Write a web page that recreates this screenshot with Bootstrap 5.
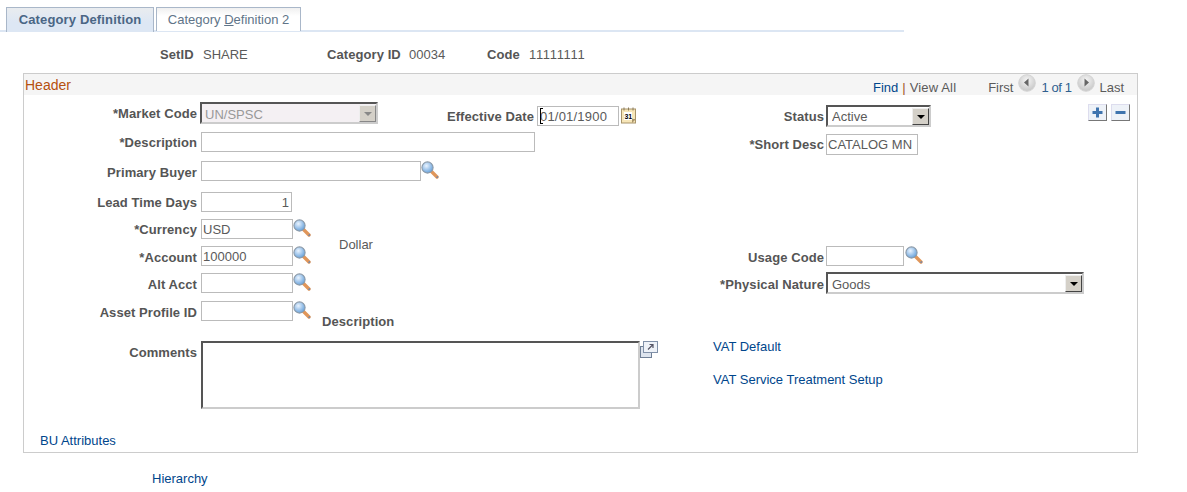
<!DOCTYPE html>
<html lang="en"><head><meta charset="utf-8"><title>Category Definition</title>
<link href="https://cdn.jsdelivr.net/npm/bootstrap@5.3.0/dist/css/bootstrap.min.css" rel="stylesheet">
<style>
html,body{height:492px;overflow:hidden}
body{background:#fff;color:#5a5a5a;font:13px/20px "Liberation Sans",Arial,sans-serif}
a{color:#00468c;text-decoration:none}
b,.lblx,.lbly{letter-spacing:.08px;color:#555}
.tabstrip{padding:7px 0 0 6px;width:904px;height:32px;border-bottom:2px solid #dce6f3;gap:2px;align-items:flex-start}
.tabx{height:24px;line-height:24px;text-align:center;border:1px solid #a9b7c9;border-bottom:0;background:linear-gradient(#f0f0f0,#fff 35%)}
.tabx.on{width:148px;height:25px;font-weight:700;color:#4a6685;letter-spacing:.15px;background:linear-gradient(#e9ecef,#dde7f4 60%)}
.tabx.off{width:145px;color:#607488}
.idrow{height:41px;padding-top:13px}
.idrow span,.idrow b{display:block;white-space:nowrap}
.ones{letter-spacing:.65px}
.w1{margin-left:160px;width:43px}.w2{width:124px}.w3{width:82px}.w4{width:78px}.w5{width:42px}
.panelx{margin-left:23px;width:1115px;height:380px;border:1px solid #ccc}
.bandx{height:21px;background:#f5f5f5;position:relative}
.bandx .ttl{color:#b5500f;font-size:14px;line-height:22px;padding-left:1px;width:849px}
.bandx .nv{white-space:nowrap;line-height:27px}
.bandx .bar{color:#a0562a;margin:0 4px}
.viewall{letter-spacing:.15px}
.pageof{letter-spacing:-.4px;color:#2f5f8f}
.ms-first{margin-left:32px}
.disc1{margin:0 5px}
.frow{align-items:flex-start}
.lblx{width:173px;margin-right:4px;text-align:right;font-weight:700;white-space:nowrap;flex:none}
.lbly{text-align:right;font-weight:700;white-space:nowrap;flex:none;margin-right:3px}
.form-control.inp{width:92px;height:20px;min-height:0;padding:0 1px;border:1px solid #bbb;border-radius:0;color:#5a5a5a;font-size:13px;line-height:18px;background:#fff;box-shadow:none;flex:none}
.form-control.inp.w-desc{width:334px}
.form-control.inp.w-sd{width:92px;margin-top:2px;height:21px}
.form-control.inp.w-pb{width:220px}
.form-control.inp.w-ld{width:91px;padding-right:2px}
.form-control.inp.w-uc{width:78px;margin-right:1px}
.form-control.inp.w-dt{width:82px;padding-left:2px;letter-spacing:.2px;height:20px}
.sel{position:relative;flex:none;height:22px;border:2px solid;border-color:#555 #ccc #ccc #555;background:#fff}
.sel select.form-select{height:100%;width:100%;border:0;border-radius:0;padding:1px 4px 0;background-image:none;color:#5a5a5a;font-size:13px;line-height:18px;background-color:transparent;box-shadow:none}
.sel.sc select.form-select{padding-top:2px}
.sel .drop{position:absolute;right:0;top:1px;width:17px;height:17px;background:#d4d0c8;border:1px solid;border-color:#eee #444 #444 #eee;pointer-events:none}
.sel .drop::after{content:"";position:absolute;left:4px;top:6px;border:4px solid transparent;border-top:4px solid #000;border-bottom:0}
.sel.dis{background:#f4f0f3}
.sel.dis select.form-select{color:#999;background:#f4f0f3;padding:2px 3px 0}
.sel.dis .drop::after{border-top-color:#888}
.sel.dis .drop{border-color:#eee #888 #888 #eee}
.caretx{position:absolute;left:3px;top:2px;width:1px;height:16px;background:#000;pointer-events:none}
.caretx::before,.caretx::after{content:"";position:absolute;left:0;width:3px;height:1px;background:#000}
.caretx::before{top:0}.caretx::after{bottom:0}
.icox{flex:none;display:block}
.areax.form-control{width:439px;height:68px;border:2px solid;border-color:#555 #ccc #ccc #555;border-radius:0;box-shadow:none;resize:none;flex:none;padding:0;min-height:0}
.pm{width:19px;height:17px;background:#eef2f8;border:1px solid;border-color:#dde #777 #777 #dde;padding:0;display:block}
.pm svg{display:block}
.foot{margin:16px 0 0 152px}
.r1{height:37px;padding-top:7px}.r2{height:29px}.r3{height:31px}.r4{height:27px}.r5{height:27px}.r6{height:27px}.r7{height:28px}.r8{height:40px}.r9{height:75px}
.r1 .lblx{margin-top:2px}
.sa{width:178px;margin-left:-1px}
.l-eff{width:156px;margin-top:5px}
.i-eff{margin-top:4px}
.cal{margin:5px 0 0 2px}
.l-st{width:187px;margin-top:5px;margin-right:2px}
.sb{width:105px;margin-top:3px}
.pmwrap{margin:2px 0 0 157px;gap:4px}
.r2 .lblx{margin-top:1px}
.l-sd{width:289px;margin-top:3px;margin-right:2px}
.r3 .lblx{margin-top:2px}
.r4 .lblx,.r5 .lblx{margin-top:1px}
.r6 .lblx,.r7 .lblx,.r8 .lblx,.r9 .lblx{margin-top:2px}
.dollar{margin:16px 0 0 28px}
.l-uc{width:513px;margin-right:2px;margin-top:2px}
.l-pn{width:513px;margin-right:2px;margin-top:2px}
.sc{width:258px;margin-top:-1px}
.l-de{width:84px;margin-top:11px;margin-right:0;padding-left:11px;text-align:left}
.vatlinks{margin-left:55px;gap:13px;margin-top:-4px}
.burow{padding-left:16px;margin-top:15px}
</style></head><body>
<svg width="0" height="0" class="position-absolute">
<defs>
<radialGradient id="gl" cx=".4" cy=".35" r=".7"><stop offset="0" stop-color="#eaf4ff"/><stop offset="1" stop-color="#5d9bd8"/></radialGradient>
<radialGradient id="gd" cx=".5" cy=".35" r=".7"><stop offset="0" stop-color="#f6f6f6"/><stop offset="1" stop-color="#c2c2c2"/></radialGradient>
<symbol id="lens" viewBox="0 0 18 18"><path d="M10.500 10.500 16 16" stroke="#e0965a" stroke-width="3.400" stroke-linecap="round"/><path d="M15.500 16.800 17 15.500" stroke="#6d86ad" stroke-width="1.400"/><circle cx="6.500" cy="6.500" r="5.600" fill="url(#gl)" stroke="#8c9aa8" stroke-width="1.100"/></symbol>
<symbol id="dl" viewBox="0 0 18 18"><circle cx="9" cy="9" r="8.300" fill="url(#gd)" stroke="#d4d4d4"/><path d="M10.500 4.500v8L6 8.500z" fill="#666"/></symbol>
<symbol id="dr" viewBox="0 0 18 18"><circle cx="9" cy="9" r="8.300" fill="url(#gd)" stroke="#d4d4d4"/><path d="M7.500 4.500v8L12 8.500z" fill="#666"/></symbol>
</defs></svg>

<div class="tabstrip d-flex">
  <div class="tabx on">Category Definition</div>
  <div class="tabx off">Category <u>D</u>efinition 2</div>
</div>
<div class="idrow d-flex">
  <b class="w1">SetID</b><span class="w2">SHARE</span><b class="w3">Category ID</b><span class="w4">00034</span><b class="w5">Code</b><span class="ones">11111111</span>
</div>

<div class="panelx">
  <div class="bandx d-flex">
    <div class="ttl">Header</div>
    <div class="nv d-flex align-items-start">
      <a href="#">Find</a><span class="bar">|</span><span class="viewall">View All</span>
      <span class="ms-first">First</span>
      <svg class="icox disc1" width="18" height="18"><use href="#dl"/></svg>
      <a href="#" class="pageof">1 of 1</a>
      <svg class="icox disc1" width="18" height="18"><use href="#dr"/></svg>
      <span>Last</span>
    </div>
  </div>

  <div class="frow d-flex r1">
    <div class="lblx">*Market Code</div>
    <div class="sel dis sa"><select class="form-select" disabled><option>UN/SPSC</option></select><span class="drop"></span></div>
    <div class="lbly l-eff">Effective Date</div>
    <div class="position-relative i-eff"><input class="form-control inp w-dt" value="01/01/1900"><span class="caretx"></span></div>
    <svg class="icox cal" width="16" height="17" viewBox="0 0 16 17"><rect x=".5" y="2" width="14" height="14" fill="#f7e6b8" stroke="#a8946a"/><path d="M3 .5v3M7.500.5v3M12 .5v3" stroke="#8a7a58"/><rect x="3" y="5" width="8" height="8" fill="#fff"/><text x="3.400" y="11.600" font-size="7" font-weight="700" fill="#000" font-family="Liberation Sans">31</text><path d="M11 16l4-4h-4z" fill="#a8946a"/></svg>
    <div class="lbly l-st">Status</div>
    <div class="sel sb"><select class="form-select"><option>Active</option></select><span class="drop"></span></div>
    <div class="d-flex pmwrap">
      <button class="pm" aria-label="Add"><svg width="17" height="15" viewBox="0 0 17 15"><path d="M8.500 2.500v10M3.500 7.500h10" stroke="#3f74ae" stroke-width="3"/></svg></button>
      <button class="pm" aria-label="Remove"><svg width="17" height="15" viewBox="0 0 17 15"><path d="M3.500 7.500h10" stroke="#3f74ae" stroke-width="3"/></svg></button>
    </div>
  </div>

  <div class="frow d-flex r2">
    <div class="lblx">*Description</div>
    <input class="form-control inp w-desc">
    <div class="lbly l-sd">*Short Desc</div>
    <input class="form-control inp w-sd" value="CATALOG MN">
  </div>

  <div class="frow d-flex r3">
    <div class="lblx">Primary Buyer</div>
    <input class="form-control inp w-pb"><svg class="icox" width="18" height="18"><use href="#lens"/></svg>
  </div>

  <div class="frow d-flex r4">
    <div class="lblx">Lead Time Days</div>
    <input class="form-control inp w-ld text-end" value="1">
  </div>

  <div class="frow d-flex r5">
    <div class="lblx">*Currency</div>
    <input class="form-control inp" value="USD"><svg class="icox" width="18" height="18"><use href="#lens"/></svg>
    <div class="dollar">Dollar</div>
  </div>

  <div class="frow d-flex r6">
    <div class="lblx">*Account</div>
    <input class="form-control inp" value="100000"><svg class="icox" width="18" height="18"><use href="#lens"/></svg>
    <div class="lbly l-uc">Usage Code</div>
    <input class="form-control inp w-uc"><svg class="icox" width="18" height="18"><use href="#lens"/></svg>
  </div>

  <div class="frow d-flex r7">
    <div class="lblx">Alt Acct</div>
    <input class="form-control inp"><svg class="icox" width="18" height="18"><use href="#lens"/></svg>
    <div class="lbly l-pn">*Physical Nature</div>
    <div class="sel sc"><select class="form-select"><option>Goods</option></select><span class="drop"></span></div>
  </div>

  <div class="frow d-flex r8">
    <div class="lblx">Asset Profile ID</div>
    <input class="form-control inp"><svg class="icox" width="18" height="18"><use href="#lens"/></svg>
    <div class="lbly l-de">Description</div>
  </div>

  <div class="frow d-flex r9">
    <div class="lblx">Comments</div>
    <textarea class="form-control areax"></textarea>
    <svg class="icox" width="18" height="18" viewBox="0 0 18 18"><rect x=".5" y="5.500" width="11" height="11" fill="#dde4ee" stroke="#6f7f96"/><rect x="3.500" y=".5" width="14" height="11" fill="#eef2f8" stroke="#8090a8"/><path d="M8 8.500l5-5M9.500 3.500h3.500v3.500" fill="none" stroke="#556" stroke-width="1.200"/></svg>
    <div class="d-flex flex-column vatlinks"><a href="#">VAT Default</a><a href="#">VAT Service Treatment Setup</a></div>
  </div>

  <div class="burow"><a href="#">BU Attributes</a></div>
</div>
<div class="foot"><a href="#">Hierarchy</a></div>
</body></html>
